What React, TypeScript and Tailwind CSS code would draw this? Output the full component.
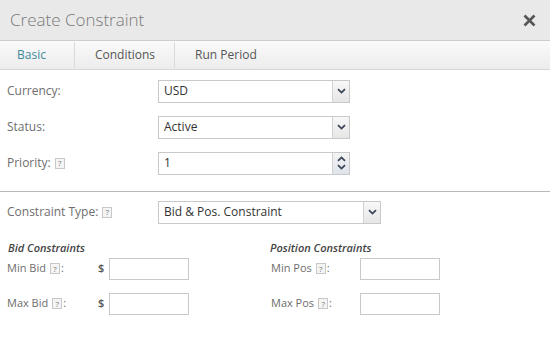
import React from 'react';

const Help: React.FC = () => (
  <span className="ml-[4px] inline-flex h-[11px] w-[10px] items-center justify-center border border-[#c8c8c8] bg-[#f4f4f4] text-[8px] leading-none text-[#777]">
    ?
  </span>
);

const Chevron: React.FC<{ up?: boolean }> = ({ up }) => (
  <svg width="9" height="6" viewBox="0 0 9 6" className={up ? 'rotate-180' : ''}>
    <path d="M1 1.2 L4.5 4.6 L8 1.2" fill="none" stroke="#3b4658" strokeWidth="1.8" />
  </svg>
);

const SelectBox: React.FC<{ value: string; width: string }> = ({ value, width }) => (
  <div className={`flex h-[23px] ${width} border border-[#c9c9c9] bg-white`}>
    <div className="flex flex-1 items-center px-[5px] text-[12px] text-[#333]">{value}</div>
    <div className="flex w-[17px] items-center justify-center border-l border-[#d2d2d2] bg-gradient-to-b from-[#f8f8f8] to-[#e6e6e6]">
      <Chevron />
    </div>
  </div>
);

const FormRow: React.FC<{ label: string; help?: boolean; children: React.ReactNode; className?: string }> = ({
  label,
  help,
  children,
  className = '',
}) => (
  <div className={`flex h-[36px] items-center ${className}`}>
    <div className="flex w-[151px] items-center text-[12px] text-[#6e6e6e]">
      {label}
      {help && <Help />}
    </div>
    {children}
  </div>
);

const SmallInput: React.FC = () => (
  <div className="h-[22px] w-[80px] border border-[#c9c9c9] bg-white" />
);

const SubLabel: React.FC<{ text: string; width: string }> = ({ text, width }) => (
  <div className={`flex ${width} items-center text-[11px] text-[#6e6e6e]`}>
    {text}
    <Help />
    <span className="ml-[1px]">:</span>
  </div>
);

export default function App() {
  return (
    <div className="h-[360px] w-[550px] overflow-hidden bg-white font-['Open_Sans',sans-serif]">
      {/* Header */}
      <div className="flex h-[41px] items-center justify-between border-b border-[#cdcdcd] bg-[#e9e9e9] pl-[10px] pr-[14px]">
        <span className="text-[17px] font-light text-[#7a7a7a]">Create Constraint</span>
        <svg width="13" height="13" viewBox="0 0 13 13">
          <path d="M1.5 1.5 L11.5 11.5 M11.5 1.5 L1.5 11.5" stroke="#555" strokeWidth="2.6" />
        </svg>
      </div>

      {/* Tabs */}
      <div className="flex h-[29px] items-center border-b border-[#d6d6d6] bg-gradient-to-b from-[#fafafa] to-[#ececec] text-[12px]">
        <span className="ml-[17px] text-[#3d8a9b]">Basic</span>
        <span className="ml-[28px] h-[26px] w-px bg-[#dadada]" />
        <span className="ml-[20px] text-[#555]">Conditions</span>
        <span className="ml-[19px] h-[26px] w-px bg-[#dadada]" />
        <span className="ml-[20px] text-[#555]">Run Period</span>
      </div>

      {/* Basic fields */}
      <div className="pl-[7px] pt-[3px]">
        <FormRow label="Currency:">
          <SelectBox value="USD" width="w-[192px]" />
        </FormRow>
        <FormRow label="Status:">
          <SelectBox value="Active" width="w-[192px]" />
        </FormRow>
        <FormRow label="Priority:" help>
          <div className="flex h-[23px] w-[192px] border border-[#c9c9c9] bg-white">
            <div className="flex flex-1 items-center px-[5px] text-[12px] text-[#333]">1</div>
            <div className="flex w-[17px] flex-col items-center justify-center gap-[2px] border-l border-[#d2d2d2] bg-gradient-to-b from-[#f4f4f4] to-[#dfe3ea]">
              <Chevron up />
              <Chevron />
            </div>
          </div>
        </FormRow>
      </div>

      <div className="mt-[10px] h-px bg-[#b9b9b9]" />

      <div className="pl-[7px] pt-[2px]">
        <FormRow label="Constraint Type:" help>
          <SelectBox value="Bid & Pos. Constraint" width="w-[223px]" />
        </FormRow>

        <div className="mt-[10px] flex">
          {/* Bid constraints */}
          <div className="w-[263px]">
            <div className="pl-[1px] text-[11px] font-semibold italic text-[#444]">Bid Constraints</div>
            <div className="flex h-[24px] items-center">
              <SubLabel text="Min Bid" width="w-[91px]" />
              <span className="mr-[5px] text-[11px] font-semibold text-[#555]">$</span>
              <SmallInput />
            </div>
            <div className="flex h-[46px] items-center">
              <SubLabel text="Max Bid" width="w-[91px]" />
              <span className="mr-[5px] text-[11px] font-semibold text-[#555]">$</span>
              <SmallInput />
            </div>
          </div>

          {/* Position constraints */}
          <div>
            <div className="text-[11px] font-semibold italic text-[#444]">Position Constraints</div>
            <div className="flex h-[24px] items-center pl-[1px]">
              <SubLabel text="Min Pos" width="w-[89px]" />
              <SmallInput />
            </div>
            <div className="flex h-[46px] items-center pl-[1px]">
              <SubLabel text="Max Pos" width="w-[89px]" />
              <SmallInput />
            </div>
          </div>
        </div>
      </div>
    </div>
  );
}
